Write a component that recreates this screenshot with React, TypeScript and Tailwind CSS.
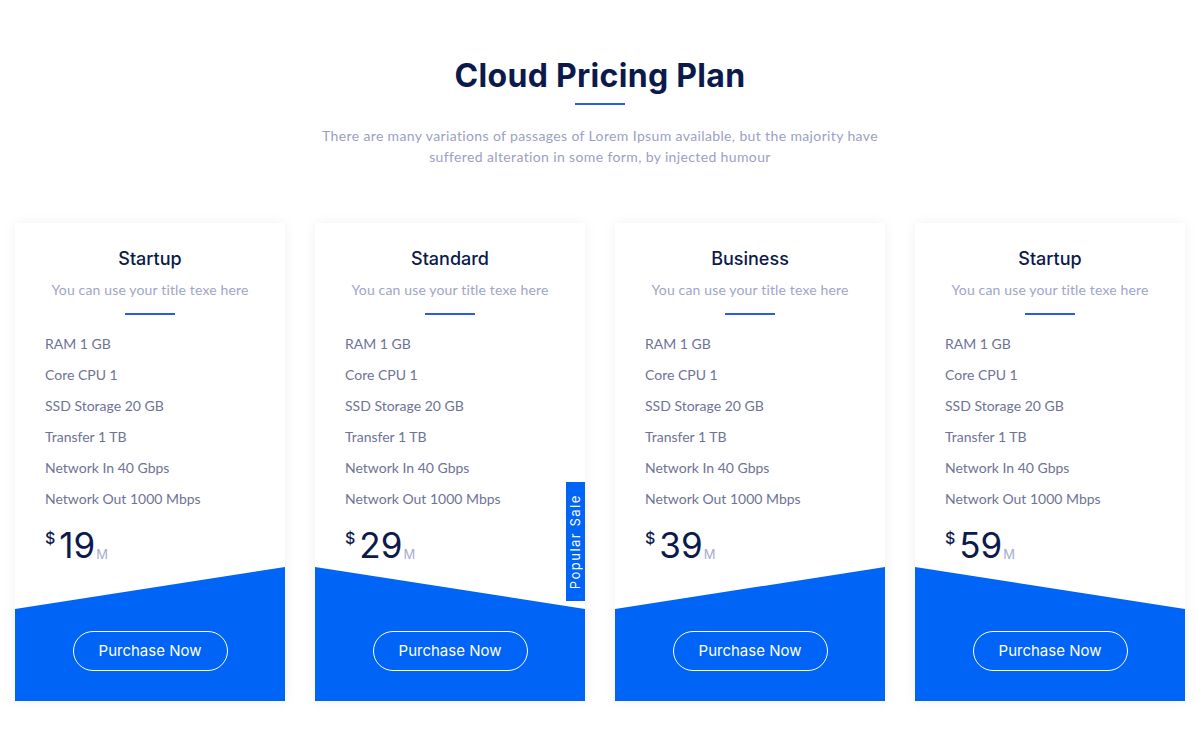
import React from "react";

const features = [
  "RAM 1 GB",
  "Core CPU 1",
  "SSD Storage 20 GB",
  "Transfer 1 TB",
  "Network In 40 Gbps",
  "Network Out 1000 Mbps",
];

const plans = [
  { name: "Startup", price: "19", flip: false, popular: false },
  { name: "Standard", price: "29", flip: true, popular: true },
  { name: "Business", price: "39", flip: false, popular: false },
  { name: "Startup", price: "59", flip: true, popular: false },
];

const head = { fontFamily: "Inter, 'Open Sans', sans-serif" };
const body = { fontFamily: "Lato, 'Open Sans', sans-serif" };

function Card({ plan }: { plan: (typeof plans)[number] }) {
  return (
    <div className="relative flex flex-col bg-white shadow-[0_0_12px_rgba(20,30,80,0.06)]">
      <div className="flex flex-col items-center pt-[24px]">
        <h3 className="text-[18px] leading-[24px] font-medium text-[#0b1a4b]" style={head}>
          {plan.name}
        </h3>
        <p className="mt-[7px] text-[14px] leading-[24px] tracking-[0.15px] text-[#a0a5c8]" style={body}>
          You can use your title texe here
        </p>
        <div className="mt-[11px] h-[2px] w-[50px] bg-[#2a5ce6]" />
      </div>
      <ul className="mt-[18px] flex flex-col gap-[9px] px-[30px]" style={body}>
        {features.map((f) => (
          <li key={f} className="text-[14px] leading-[22px] text-[#6e7396]">
            {f}
          </li>
        ))}
      </ul>
      <div className="mt-[13px] flex items-start px-[30px] text-[#0b1a4b]" style={head}>
        <span className="mt-[7px] text-[16px] leading-[16px] font-medium">$</span>
        <span className="ml-[4px] text-[35px] leading-[44px]">{plan.price}</span>
        <span className="mt-[23px] ml-[1px] text-[13px] leading-[16px] text-[#a7acd0]">M</span>
      </div>
      <div
        className={
          "flex h-[134px] items-start justify-center bg-[#0064f6] pt-[64px] " +
          (plan.flip
            ? "[clip-path:polygon(0_0,100%_42px,100%_100%,0_100%)]"
            : "[clip-path:polygon(0_42px,100%_0,100%_100%,0_100%)]")
        }
      >
        <button
          className="h-[40px] w-[155px] rounded-full border border-white text-[15px] text-white"
          style={head}
        >
          Purchase Now
        </button>
      </div>
      {plan.popular && (
        <div className="absolute right-0 top-[259px] flex h-[119px] w-[19px] items-center justify-center bg-[#0064f6]">
          <span
            className="-rotate-90 whitespace-nowrap text-[13px] tracking-[1.5px] text-white"
            style={head}
          >
            Popular Sale
          </span>
        </div>
      )}
    </div>
  );
}

export default function App() {
  return (
    <div className="min-h-[741px] bg-white">
      <div className="flex flex-col items-center pt-[57px]">
        <h1 className="text-[32px] leading-[38px] font-bold tracking-[0.3px] text-[#0b1a4b]" style={head}>
          Cloud Pricing Plan
        </h1>
        <div className="mt-[8px] h-[2px] w-[50px] bg-[#2a5ce6]" />
        <p className="mt-[20px] text-center text-[14px] leading-[21px] tracking-[0.37px] text-[#9a9fc4]" style={body}>
          There are many variations of passages of Lorem Ipsum available, but the majority have
          <br />
          suffered alteration in some form, by injected humour
        </p>
      </div>
      <div className="mt-[56px] grid grid-cols-4 gap-[30px] px-[15px]">
        {plans.map((p, i) => (
          <Card key={i} plan={p} />
        ))}
      </div>
    </div>
  );
}
